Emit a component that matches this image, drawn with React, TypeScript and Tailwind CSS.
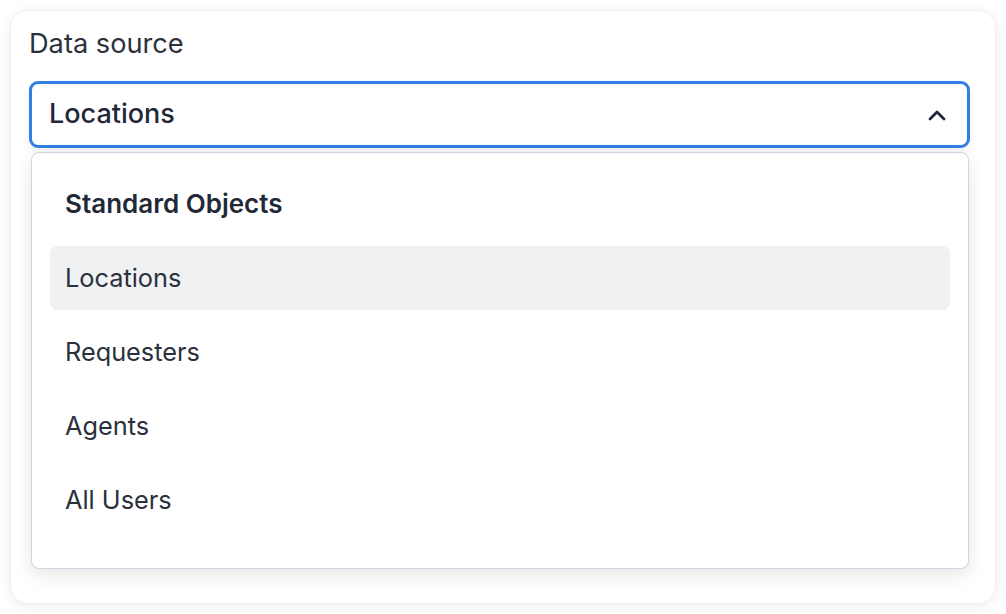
const items = ["Locations", "Requesters", "Agents", "All Users"];

function ChevronUp() {
  return (
    <svg width="18" height="12" viewBox="0 0 18 12" fill="none" className="text-[#1f2937]">
      <path d="M2 10 L9 3 L16 10" stroke="currentColor" strokeWidth="2.8" strokeLinecap="round" strokeLinejoin="round" />
    </svg>
  );
}

export default function App() {
  const selected = "Locations";
  return (
    <div className="min-h-[614px] w-full bg-white p-[10px] font-['Inter',sans-serif] text-[#1f2937]">
      <div className="h-[594px] w-[986px] rounded-[18px] border border-[#f0f0f2] bg-white pl-[18px] pr-[25px] pt-[16px] shadow-[0_2px_12px_rgba(0,0,0,0.08)]">
        <label className="block text-[27.2px] leading-[34px] text-[#2a313c]">Data source</label>
        <div className="relative mt-[20px]">
          <button className="flex h-[67px] w-full items-center justify-between rounded-[9px] border-[3px] border-[#2f7fe4] bg-white pl-[17px] pr-[21px] shadow-[0_4px_10px_rgba(0,0,0,0.06)]">
            <span className="text-[27px] font-medium text-[#1f2937]">{selected}</span>
            <ChevronUp />
          </button>
          <div className="absolute left-[2px] right-[1px] top-full mt-[4px] rounded-[8px] border-[1.5px] border-[#cbd5e1] bg-white px-[18px] pb-[36px] pt-[35px] shadow-[0_6px_18px_rgba(15,23,42,0.1)]">
            <div className="px-[15px] text-[26px] font-semibold leading-[32px] text-[#1f2937]">Standard Objects</div>
            <ul className="mt-[26px] flex flex-col gap-[10px]">
              {items.map((item) => (
                <li
                  key={item}
                  className={
                    item === selected
                      ? "flex h-[64px] items-center rounded-[8px] bg-[#f0f1f3] px-[15px] text-[25.3px] text-[#2a313c]"
                      : "flex h-[64px] items-center rounded-[8px] px-[15px] text-[25.3px] text-[#2a313c]"
                  }
                >
                  {item}
                </li>
              ))}
            </ul>
          </div>
        </div>
      </div>
    </div>
  );
}
